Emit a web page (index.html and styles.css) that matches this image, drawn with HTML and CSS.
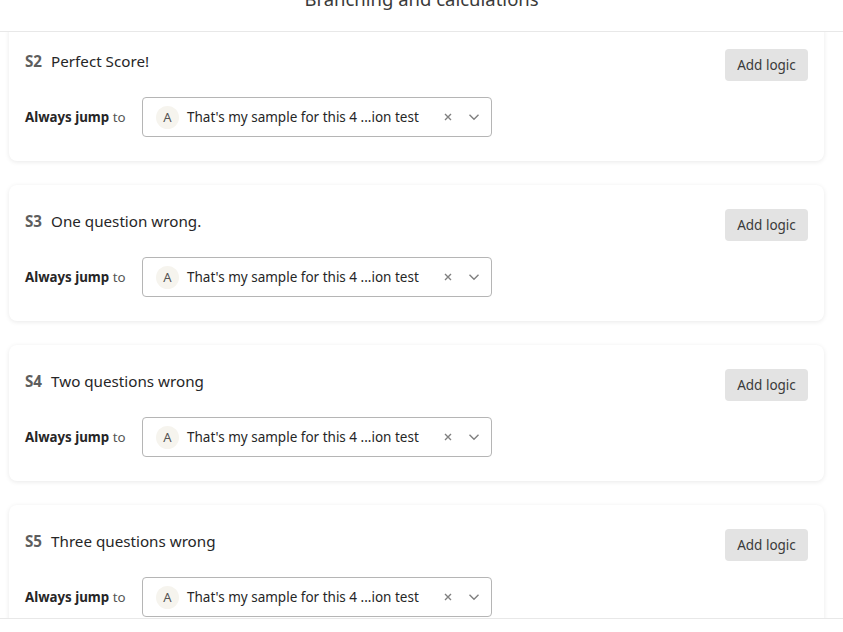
FILE: index.html
```html
<!DOCTYPE html>
<html>
<head>
<meta charset="utf-8">
<link rel="stylesheet" href="styles.css">
</head>
<body>
<div class="page">
  <header class="topbar"><h1 class="title">Branching and calculations</h1></header>
  <main class="scroller">
    <div class="list">
      <section class="card">
        <div class="card-head">
          <div class="card-title"><span class="num">S2</span>Perfect Score!</div>
          <button class="btn">Add logic</button>
        </div>
        <div class="jump-row">
          <span class="jump-label"><b>Always jump</b> to</span>
          <div class="select">
            <span class="avatar">A</span>
            <span class="value">That's my sample for this 4 ...ion test</span>
            <svg class="clear" width="10" height="10" viewBox="0 0 10 10"><path d="M2 2L8 8M8 2L2 8" stroke="#808080" stroke-width="1.4" fill="none"/></svg>
            <svg class="chev" width="12" height="8" viewBox="0 0 12 8"><path d="M1.5 1.8L6 6.2L10.5 1.8" stroke="#808080" stroke-width="1.4" fill="none"/></svg>
          </div>
        </div>
      </section>
      <section class="card">
        <div class="card-head">
          <div class="card-title"><span class="num">S3</span>One question wrong.</div>
          <button class="btn">Add logic</button>
        </div>
        <div class="jump-row">
          <span class="jump-label"><b>Always jump</b> to</span>
          <div class="select">
            <span class="avatar">A</span>
            <span class="value">That's my sample for this 4 ...ion test</span>
            <svg class="clear" width="10" height="10" viewBox="0 0 10 10"><path d="M2 2L8 8M8 2L2 8" stroke="#808080" stroke-width="1.4" fill="none"/></svg>
            <svg class="chev" width="12" height="8" viewBox="0 0 12 8"><path d="M1.5 1.8L6 6.2L10.5 1.8" stroke="#808080" stroke-width="1.4" fill="none"/></svg>
          </div>
        </div>
      </section>
      <section class="card">
        <div class="card-head">
          <div class="card-title"><span class="num">S4</span>Two questions wrong</div>
          <button class="btn">Add logic</button>
        </div>
        <div class="jump-row">
          <span class="jump-label"><b>Always jump</b> to</span>
          <div class="select">
            <span class="avatar">A</span>
            <span class="value">That's my sample for this 4 ...ion test</span>
            <svg class="clear" width="10" height="10" viewBox="0 0 10 10"><path d="M2 2L8 8M8 2L2 8" stroke="#808080" stroke-width="1.4" fill="none"/></svg>
            <svg class="chev" width="12" height="8" viewBox="0 0 12 8"><path d="M1.5 1.8L6 6.2L10.5 1.8" stroke="#808080" stroke-width="1.4" fill="none"/></svg>
          </div>
        </div>
      </section>
      <section class="card">
        <div class="card-head">
          <div class="card-title"><span class="num">S5</span>Three questions wrong</div>
          <button class="btn">Add logic</button>
        </div>
        <div class="jump-row">
          <span class="jump-label"><b>Always jump</b> to</span>
          <div class="select">
            <span class="avatar">A</span>
            <span class="value">That's my sample for this 4 ...ion test</span>
            <svg class="clear" width="10" height="10" viewBox="0 0 10 10"><path d="M2 2L8 8M8 2L2 8" stroke="#808080" stroke-width="1.4" fill="none"/></svg>
            <svg class="chev" width="12" height="8" viewBox="0 0 12 8"><path d="M1.5 1.8L6 6.2L10.5 1.8" stroke="#808080" stroke-width="1.4" fill="none"/></svg>
          </div>
        </div>
      </section>
    </div>
  </main>
  <footer class="bottombar"></footer>
</div>
</body>
</html>
```

FILE: styles.css
```css
html, body {
  margin: 0;
  padding: 0;
  background: #fff;
}
body {
  font-family: "Noto Sans", "Open Sans", sans-serif;
  color: #262627;
}
.page {
  width: 843px;
  height: 632px;
  display: flex;
  flex-direction: column;
  overflow: hidden;
}
.topbar {
  height: 31px;
  flex: 0 0 31px;
  border-bottom: 1px solid #e8e8e8;
  overflow: hidden;
  display: flex;
  justify-content: center;
}
.title {
  margin: -13px 0 0 0;
  font-size: 18.5px;
  font-weight: 400;
  line-height: 24px;
  color: #3a3a3a;
}
.scroller {
  flex: 1 1 auto;
  overflow: hidden;
}
.list {
  margin-top: -7px;
  display: flex;
  flex-direction: column;
  gap: 24px;
  padding: 0 19px 0 9px;
}
.card {
  background: #fff;
  border-radius: 8px;
  box-shadow: 0 1px 5px rgba(0, 0, 0, 0.09);
  padding: 24px 16px;
  display: flex;
  flex-direction: column;
  gap: 16px;
}
.card-head {
  display: flex;
  justify-content: space-between;
  align-items: flex-start;
}
.card-title {
  font-size: 15.2px;
  line-height: 24px;
  color: #262627;
}
.num {
  font-weight: 700;
  color: #5e5e5e;
  margin-right: 9px;
}
.btn {
  height: 32px;
  width: 83px;
  border: none;
  border-radius: 4px;
  background: #e3e3e3;
  color: #3a3a3a;
  font-family: inherit;
  font-size: 13.5px;
  padding: 0;
  margin-top: 0;
}
.jump-row {
  display: flex;
  align-items: center;
}
.jump-label {
  width: 117px;
  font-size: 13.3px;
  color: #555;
}
.jump-label b {
  color: #262627;
}
.select {
  box-sizing: border-box;
  width: 350px;
  height: 40px;
  border: 1px solid #b5b5b5;
  border-radius: 4px;
  display: flex;
  align-items: center;
  padding: 0 0 0 13px;
}
.avatar {
  width: 23px;
  height: 23px;
  border-radius: 50%;
  background: #f6f4ee;
  color: #555;
  font-size: 13px;
  display: flex;
  align-items: center;
  justify-content: center;
  margin-right: 8px;
}
.value {
  font-size: 13.5px;
  color: #262627;
  white-space: nowrap;
}
.clear {
  margin-left: 24px;
}
.chev {
  margin-left: 15px;
}
.bottombar {
  flex: 0 0 13px;
  border-top: 1px solid #e8e8e8;
  background: #fff;
}
```
